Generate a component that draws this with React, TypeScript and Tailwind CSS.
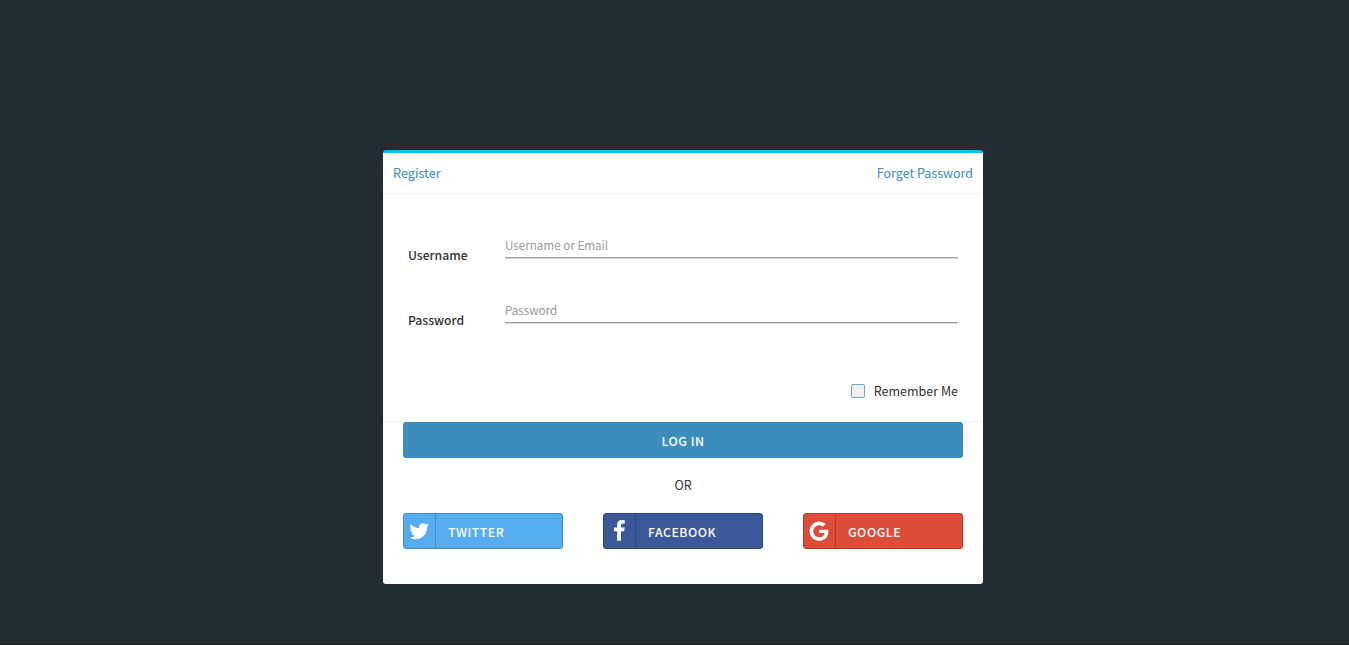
import type { ReactNode } from "react";

function BrandIcon({ path }: { path: string }) {
  return (
    <svg viewBox="0 0 1792 1792" className="size-[22.4px] shrink-0" fill="currentColor" aria-hidden="true">
      <path d={path} />
    </svg>
  );
}

const twitterPath =
  "M1684 408q-67 98-162 167 1 14 1 42 0 130-38 259.500t-115.500 248.500-184.500 210.500-258 146-323 54.500q-271 0-496-145 35 4 78 4 225 0 401-138-105-2-188-64.500t-114-159.500q33 5 61 5 43 0 85-11-112-23-185.500-111.500t-73.500-205.500v-4q68 38 146 41-66-44-105-115t-39-154q0-88 44-163 121 149 294.500 238.500t371.500 99.500q-8-38-8-74 0-134 94.500-228.500t228.500-94.500q140 0 236 102 109-21 205-78-37 115-142 178 93-10 186-50z";
const facebookPath =
  "M1343 12v264h-157q-86 0-116 36t-30 108v189h293l-39 296h-254v759h-306v-759h-255v-296h255v-218q0-186 104-288.500t277-102.500q147 0 228 12z";
const googlePath =
  "M896 786h725q12 67 12 128 0 217-91 387.500t-259.500 266.500-386.500 96q-157 0-299-60.500t-245-163.500-163.500-245-60.500-299 60.500-299 163.500-245 245-163.500 299-60.500q300 0 515 201l-209 201q-123-119-306-119-129 0-238.500 65t-173.500 176.500-64 243.500 64 243.500 173.500 176.500 238.500 65q87 0 160-24t120-60 82-82 51.500-87 22.500-78h-436v-264z";

function Field({ label, placeholder, type }: { label: string; placeholder: string; type: string }) {
  return (
    <label className="flex h-[65px] items-start">
      <span className="w-[97px] pt-[12px] text-[12.2px] font-medium leading-5">{label}</span>
      <input
        type={type}
        placeholder={placeholder}
        className="h-[25px] w-[453px] border-b border-[#9e9e9e] bg-transparent pb-px text-[11.65px] shadow-[0_1px_0_#d6d6d6] outline-none placeholder:text-[#999] placeholder:opacity-100"
      />
    </label>
  );
}

function SocialButton({ icon, label, className }: { icon: ReactNode; label: string; className: string }) {
  return (
    <button type="button" className={"flex h-9 w-40 rounded-[3px] border text-[12.3px] font-medium uppercase tracking-[0.5px] text-white " + className}>
      <span className="flex h-full w-8 items-center justify-center border-r border-inherit pr-px">{icon}</span>
      <span className="pt-2 pl-3 leading-5">{label}</span>
    </button>
  );
}

export default function App() {
  return (
    <main className="h-[645px] border-b border-[#1a2226] bg-[#222d32] pt-[150px] pl-[383px] font-['Noto_Sans_CJK_SC',sans-serif] text-[12.5px] text-[#333]">
      <section className="h-[434px] w-[600px] rounded-[3px] border-t-[3px] border-[#00c0ef] bg-white">
        <header className="flex h-[41px] items-center justify-between border-b border-[#f4f4f4] px-[10px] leading-5 text-[#3c8dbc]">
          <a href="#" className="text-[12.7px]">Register</a>
          <a href="#">Forget Password</a>
        </header>
        <form className="h-[228px] border-b border-[#f4f4f4] px-[25px] pt-[39px]">
          <Field label="Username" placeholder="Username or Email" type="text" />
          <Field label="Password" placeholder="Password" type="password" />
          <label className="mt-[18px] flex items-center justify-end gap-[9px] leading-5">
            <input type="checkbox" className="size-[14px] appearance-none rounded-[2px] border border-[#6ba5bf] bg-[#f0f0f0]" />
            Remember Me
          </label>
        </form>
        <div className="px-5">
          <button type="button" className="block h-9 w-full rounded-[3px] bg-[#3c8dbc] pt-[3px] text-[12.3px] font-medium tracking-[0.5px] text-white">LOG IN</button>
          <p className="mt-[17px] text-center leading-5">OR</p>
          <div className="mt-[18px] flex justify-between">
            <SocialButton icon={<BrandIcon path={twitterPath} />} label="Twitter" className="border-[#448cc6] bg-[#55acee]" />
            <SocialButton icon={<BrandIcon path={facebookPath} />} label="Facebook" className="border-[#2f477a] bg-[#3b5998]" />
            <SocialButton icon={<BrandIcon path={googlePath} />} label="Google" className="border-[#b63b2b] bg-[#dd4b39]" />
          </div>
        </div>
      </section>
    </main>
  );
}
